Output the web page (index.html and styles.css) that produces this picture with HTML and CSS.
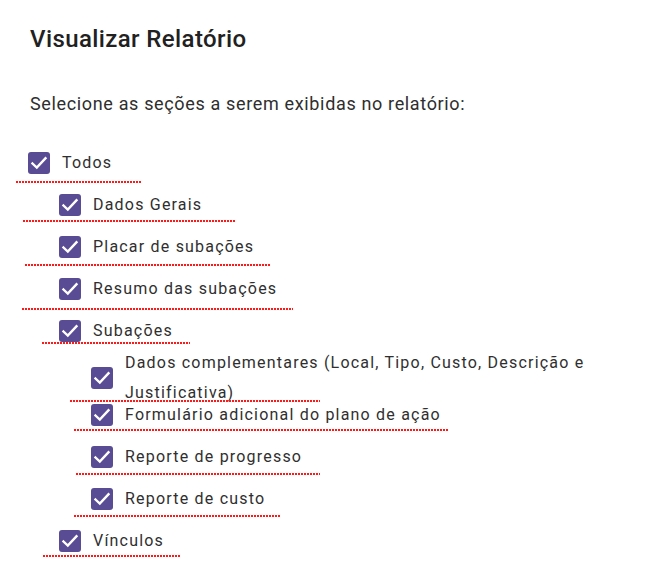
FILE: index.html
```html
<!DOCTYPE html>
<html lang="pt-BR">
<head>
<meta charset="utf-8">
<title>Visualizar Relatório</title>
<link rel="stylesheet" href="styles.css">
</head>
<body>
<div class="dialog">
  <h1 class="title">Visualizar Relatório</h1>
  <p class="subtitle">Selecione as seções a serem exibidas no relatório:</p>
  <div class="list">
    <label class="item lvl0 m-todos"><span class="box"><svg viewBox="0 0 22 22"><polyline points="4.5,11.5 8.8,15.6 17.5,6.3"/></svg></span><span class="text">Todos</span></label>
    <label class="item lvl1 m-gerais"><span class="box"><svg viewBox="0 0 22 22"><polyline points="4.5,11.5 8.8,15.6 17.5,6.3"/></svg></span><span class="text">Dados Gerais</span></label>
    <label class="item lvl1 m-placar"><span class="box"><svg viewBox="0 0 22 22"><polyline points="4.5,11.5 8.8,15.6 17.5,6.3"/></svg></span><span class="text">Placar de subações</span></label>
    <label class="item lvl1 m-resumo"><span class="box"><svg viewBox="0 0 22 22"><polyline points="4.5,11.5 8.8,15.6 17.5,6.3"/></svg></span><span class="text">Resumo das subações</span></label>
    <label class="item lvl1 m-sub"><span class="box"><svg viewBox="0 0 22 22"><polyline points="4.5,11.5 8.8,15.6 17.5,6.3"/></svg></span><span class="text">Subações</span></label>
    <label class="item lvl2 multi m-comp"><span class="inner"><span class="box"><svg viewBox="0 0 22 22"><polyline points="4.5,11.5 8.8,15.6 17.5,6.3"/></svg></span><span class="text">Dados complementares (Local, Tipo, Custo, Descrição e Justificativa)</span></span></label>
    <label class="item lvl2 m-form"><span class="box"><svg viewBox="0 0 22 22"><polyline points="4.5,11.5 8.8,15.6 17.5,6.3"/></svg></span><span class="text">Formulário adicional do plano de ação</span></label>
    <label class="item lvl2 m-prog"><span class="box"><svg viewBox="0 0 22 22"><polyline points="4.5,11.5 8.8,15.6 17.5,6.3"/></svg></span><span class="text">Reporte de progresso</span></label>
    <label class="item lvl2 m-custo"><span class="box"><svg viewBox="0 0 22 22"><polyline points="4.5,11.5 8.8,15.6 17.5,6.3"/></svg></span><span class="text">Reporte de custo</span></label>
    <label class="item lvl1 m-vinc"><span class="box"><svg viewBox="0 0 22 22"><polyline points="4.5,11.5 8.8,15.6 17.5,6.3"/></svg></span><span class="text">Vínculos</span></label>
  </div>
</div>
</body>
</html>
```
FILE: styles.css
```css
html, body {
  margin: 0;
  padding: 0;
  background: #ffffff;
}
body {
  font-family: Roboto, "Liberation Sans", Arial, sans-serif;
  color: #262626;
}
.dialog {
  width: 670px;
  box-sizing: border-box;
  padding: 25px 30px 0 0;
}
.title {
  margin: 0 0 0 30px;
  font-size: 24px;
  line-height: 28px;
  font-weight: 500;
  letter-spacing: 0.4px;
  color: #212121;
}
.subtitle {
  margin: 39px 0 0 30px;
  font-size: 18px;
  line-height: 24px;
  font-weight: 400;
  letter-spacing: 0.65px;
  color: #2e2e2e;
}
.list {
  margin-top: 26px;
  display: flex;
  flex-direction: column;
}
.item {
  position: relative;
  height: 42px;
  display: flex;
  align-items: center;
  font-size: 16px;
  letter-spacing: 1.2px;
  color: #2f2f2f;
}
.lvl0 { padding-left: 28px; }
.lvl1 { padding-left: 59px; }
.lvl2 { padding-left: 91px; }
.inner {
  display: flex;
  align-items: center;
  margin-top: 10px;
}
.box {
  flex: none;
  width: 22px;
  height: 22px;
  border-radius: 3px;
  background: #594b94;
  margin-right: 12px;
  display: flex;
}
.box svg {
  width: 22px;
  height: 22px;
}
.box polyline {
  fill: none;
  stroke: #ffffff;
  stroke-width: 2.4;
  stroke-linecap: square;
  stroke-linejoin: miter;
}
.text {
  line-height: 30px;
}
.item::after {
  content: "";
  position: absolute;
  height: 2px;
  background-image: linear-gradient(to right, #ff1a1a 2px, transparent 2px);
  background-size: 3px 2px;
  background-repeat: repeat-x;
}
.m-todos::after  { left: 16px; width: 125px; top: 39px; }
.m-gerais::after { left: 23px; width: 212px; top: 36px; }
.m-placar::after { left: 25px; width: 245px; top: 38px; }
.m-resumo::after { left: 22px; width: 271px; top: 40px; }
.m-sub::after    { left: 42px; width: 148px; top: 32px; }
.m-comp::after   { left: 70px; width: 250px; top: 48px; }
.m-form::after   { left: 74px; width: 374px; top: 35px; }
.m-prog::after   { left: 76px; width: 244px; top: 37px; }
.m-custo::after  { left: 74px; width: 206px; top: 37px; }
.m-vinc::after   { left: 43px; width: 137px; top: 35px; }
```
